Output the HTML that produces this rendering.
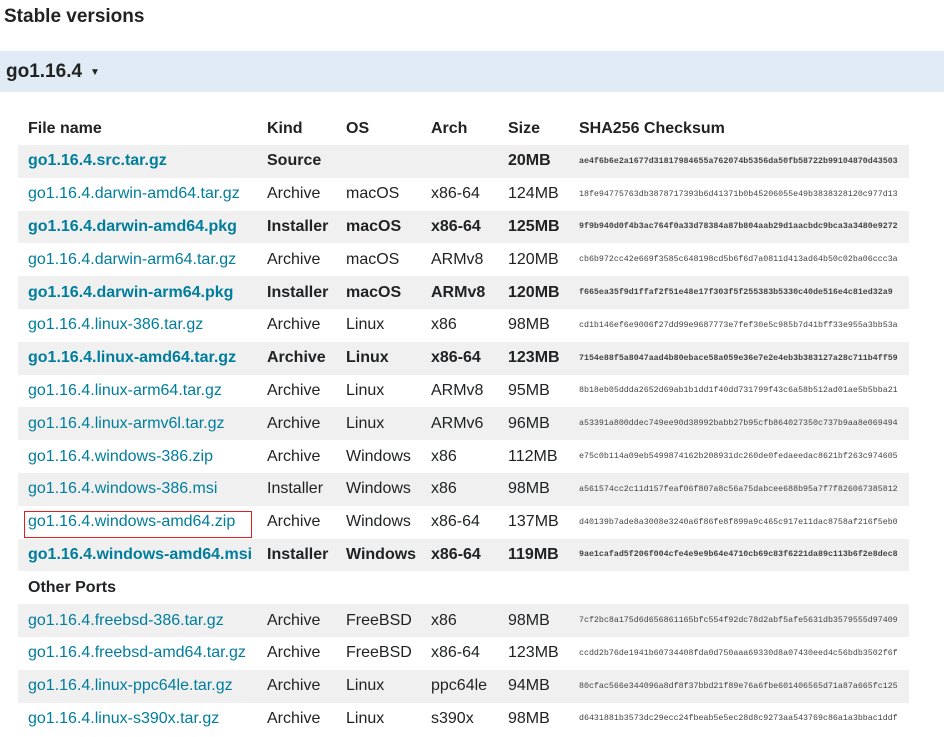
<!DOCTYPE html>
<html><head><meta charset="utf-8"><style>
body{margin:0;background:#fff;font-family:"Liberation Sans",sans-serif;color:#202224;width:944px;height:737px;overflow:hidden;position:relative}
h2{position:absolute;left:4px;top:6px;margin:0;font-size:19px;font-weight:bold}
.bar{position:absolute;left:0;top:51px;width:944px;height:41px;background:#e0ebf5}
.bar span{position:absolute;left:6px;top:10px;font-size:19px;font-weight:bold}
.bar i{position:absolute;left:90px;top:16px;font-style:normal;font-size:10px}
table{position:absolute;left:18px;top:112px;width:891px;border-collapse:collapse;font-size:16px}
td,th{height:32.8px;padding:0;text-align:left;white-space:nowrap}
th{height:33px;font-weight:bold}
td:first-child,th:first-child{padding-left:10px;width:239px}
.k{width:79px}.o{width:85px}.a{width:77px}.s{width:71px}
td.c{font-family:"Liberation Mono",monospace;font-size:8.3px;color:#444}
a{color:#007d9c;text-decoration:none}
tr.h td{background:#f0f0f0}
tr.b td{font-weight:bold}
tr.p td{font-weight:bold;color:#202224}
.box{position:absolute;left:24px;top:511px;width:226px;height:25px;border:1.5px solid #e02020}
</style></head><body>
<h2>Stable versions</h2>
<div class="bar"><span>go1.16.4</span><i>▼</i></div>
<table>
<tr><th>File name</th><th class="k">Kind</th><th class="o">OS</th><th class="a">Arch</th><th class="s">Size</th><th>SHA256 Checksum</th></tr>
<tr class="h b"><td><a>go1.16.4.src.tar.gz</a></td><td>Source</td><td></td><td></td><td>20MB</td><td class="c">ae4f6b6e2a1677d31817984655a762074b5356da50fb58722b99104870d43503</td></tr>
<tr><td><a>go1.16.4.darwin-amd64.tar.gz</a></td><td>Archive</td><td>macOS</td><td>x86-64</td><td>124MB</td><td class="c">18fe94775763db3878717393b6d41371b0b45206055e49b3838328120c977d13</td></tr>
<tr class="h b"><td><a>go1.16.4.darwin-amd64.pkg</a></td><td>Installer</td><td>macOS</td><td>x86-64</td><td>125MB</td><td class="c">9f9b940d0f4b3ac764f0a33d78384a87b804aab29d1aacbdc9bca3a3480e9272</td></tr>
<tr><td><a>go1.16.4.darwin-arm64.tar.gz</a></td><td>Archive</td><td>macOS</td><td>ARMv8</td><td>120MB</td><td class="c">cb6b972cc42e669f3585c648198cd5b6f6d7a0811d413ad64b50c02ba06ccc3a</td></tr>
<tr class="h b"><td><a>go1.16.4.darwin-arm64.pkg</a></td><td>Installer</td><td>macOS</td><td>ARMv8</td><td>120MB</td><td class="c">f665ea35f9d1ffaf2f51e48e17f303f5f255383b5330c40de516e4c81ed32a9</td></tr>
<tr><td><a>go1.16.4.linux-386.tar.gz</a></td><td>Archive</td><td>Linux</td><td>x86</td><td>98MB</td><td class="c">cd1b146ef6e9006f27dd99e9687773e7fef30e5c985b7d41bff33e955a3bb53a</td></tr>
<tr class="h b"><td><a>go1.16.4.linux-amd64.tar.gz</a></td><td>Archive</td><td>Linux</td><td>x86-64</td><td>123MB</td><td class="c">7154e88f5a8047aad4b80ebace58a059e36e7e2e4eb3b383127a28c711b4ff59</td></tr>
<tr><td><a>go1.16.4.linux-arm64.tar.gz</a></td><td>Archive</td><td>Linux</td><td>ARMv8</td><td>95MB</td><td class="c">8b18eb05ddda2652d69ab1b1dd1f40dd731799f43c6a58b512ad01ae5b5bba21</td></tr>
<tr class="h"><td><a>go1.16.4.linux-armv6l.tar.gz</a></td><td>Archive</td><td>Linux</td><td>ARMv6</td><td>96MB</td><td class="c">a53391a800ddec749ee90d38992babb27b95cfb864027350c737b9aa8e069494</td></tr>
<tr><td><a>go1.16.4.windows-386.zip</a></td><td>Archive</td><td>Windows</td><td>x86</td><td>112MB</td><td class="c">e75c0b114a09eb5499874162b208931dc260de0fedaeedac8621bf263c974605</td></tr>
<tr class="h"><td><a>go1.16.4.windows-386.msi</a></td><td>Installer</td><td>Windows</td><td>x86</td><td>98MB</td><td class="c">a561574cc2c11d157feaf06f807a8c56a75dabcee688b95a7f7f826067385812</td></tr>
<tr><td><a>go1.16.4.windows-amd64.zip</a></td><td>Archive</td><td>Windows</td><td>x86-64</td><td>137MB</td><td class="c">d40139b7ade8a3008e3240a6f86fe8f899a9c465c917e11dac8758af216f5eb0</td></tr>
<tr class="h b"><td><a>go1.16.4.windows-amd64.msi</a></td><td>Installer</td><td>Windows</td><td>x86-64</td><td>119MB</td><td class="c">9ae1cafad5f206f004cfe4e9e9b64e4710cb69c83f6221da89c113b6f2e8dec8</td></tr>
<tr class="p"><td colspan="6">Other Ports</td></tr>
<tr class="h"><td><a>go1.16.4.freebsd-386.tar.gz</a></td><td>Archive</td><td>FreeBSD</td><td>x86</td><td>98MB</td><td class="c">7cf2bc8a175d6d656861165bfc554f92dc78d2abf5afe5631db3579555d97409</td></tr>
<tr><td><a>go1.16.4.freebsd-amd64.tar.gz</a></td><td>Archive</td><td>FreeBSD</td><td>x86-64</td><td>123MB</td><td class="c">ccdd2b76de1941b60734408fda0d750aaa69330d8a07430eed4c56bdb3502f6f</td></tr>
<tr class="h"><td><a>go1.16.4.linux-ppc64le.tar.gz</a></td><td>Archive</td><td>Linux</td><td>ppc64le</td><td>94MB</td><td class="c">80cfac566e344096a8df8f37bbd21f89e76a6fbe601406565d71a87a665fc125</td></tr>
<tr><td><a>go1.16.4.linux-s390x.tar.gz</a></td><td>Archive</td><td>Linux</td><td>s390x</td><td>98MB</td><td class="c">d6431881b3573dc29ecc24fbeab5e5ec28d8c9273aa543769c86a1a3bbac1ddf</td></tr>
</table>
<div class="box"></div>
</body></html>
